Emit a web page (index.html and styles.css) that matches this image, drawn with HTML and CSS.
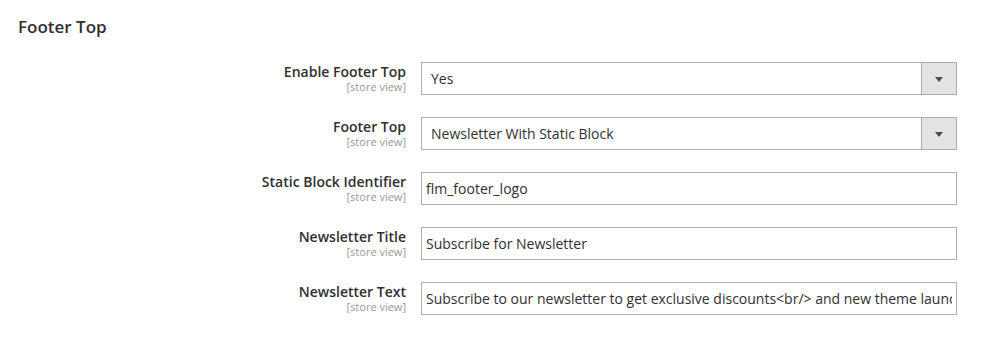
FILE: index.html
```html
<!DOCTYPE html>
<html>
<head>
<meta charset="utf-8">
<link rel="stylesheet" href="styles.css">
</head>
<body>
<section class="section">
  <h2 class="section-title">Footer Top</h2>
  <div class="rows">
    <div class="row">
      <div class="label"><span class="label-text">Enable Footer Top</span><span class="scope">[store view]</span></div>
      <div class="select"><span class="select-value">Yes</span><span class="select-btn"><span class="arrow"></span></span></div>
    </div>
    <div class="row">
      <div class="label"><span class="label-text">Footer Top</span><span class="scope">[store view]</span></div>
      <div class="select"><span class="select-value">Newsletter With Static Block</span><span class="select-btn"><span class="arrow"></span></span></div>
    </div>
    <div class="row">
      <div class="label"><span class="label-text">Static Block Identifier</span><span class="scope">[store view]</span></div>
      <input class="input" type="text" value="flm_footer_logo">
    </div>
    <div class="row">
      <div class="label"><span class="label-text">Newsletter Title</span><span class="scope">[store view]</span></div>
      <input class="input" type="text" value="Subscribe for Newsletter">
    </div>
    <div class="row">
      <div class="label"><span class="label-text">Newsletter Text</span><span class="scope">[store view]</span></div>
      <input class="input" type="text" value="Subscribe to our newsletter to get exclusive discounts&lt;br/&gt; and new theme launches">
    </div>
  </div>
</section>
</body>
</html>
```

FILE: styles.css
```css
html, body {
  margin: 0;
  padding: 0;
  background: #ffffff;
  font-family: "Open Sans", "Liberation Sans", sans-serif;
  color: #303030;
}

.section {
  padding: 17px 0 0 18px;
}

.section-title {
  margin: 0 0 25px 0;
  font-size: 17px;
  line-height: 20px;
  font-weight: 600;
  color: #303030;
}

.rows {
  display: flex;
  flex-direction: column;
  gap: 22px;
}

.row {
  display: grid;
  grid-template-columns: 388px 536px;
  column-gap: 15px;
  align-items: start;
}

.label {
  display: flex;
  flex-direction: column;
  align-items: flex-end;
  text-align: right;
}

.label-text {
  font-size: 14px;
  line-height: 19px;
  font-weight: 600;
  color: #303030;
}

.scope {
  font-size: 11px;
  line-height: 12px;
  color: #999999;
}

.select {
  box-sizing: border-box;
  height: 33px;
  border: 1px solid #adadad;
  display: flex;
  align-items: stretch;
  background: #ffffff;
}

.select-value {
  flex: 1;
  display: flex;
  align-items: center;
  padding-left: 9px;
  font-size: 14px;
  color: #303030;
}

.select-btn {
  width: 34px;
  background: #e3e3e3;
  border-left: 1px solid #adadad;
  display: flex;
  align-items: center;
  justify-content: center;
}

.arrow {
  width: 0;
  height: 0;
  margin-top: 1px;
  border-left: 4px solid transparent;
  border-right: 4px solid transparent;
  border-top: 5px solid #514943;
}

.input {
  box-sizing: border-box;
  height: 33px;
  width: 536px;
  margin: 0;
  border: 1px solid #adadad;
  padding: 0 4px;
  font-family: "Open Sans", "Liberation Sans", sans-serif;
  font-size: 14px;
  color: #303030;
  background: #ffffff;
  outline: none;
}
```
